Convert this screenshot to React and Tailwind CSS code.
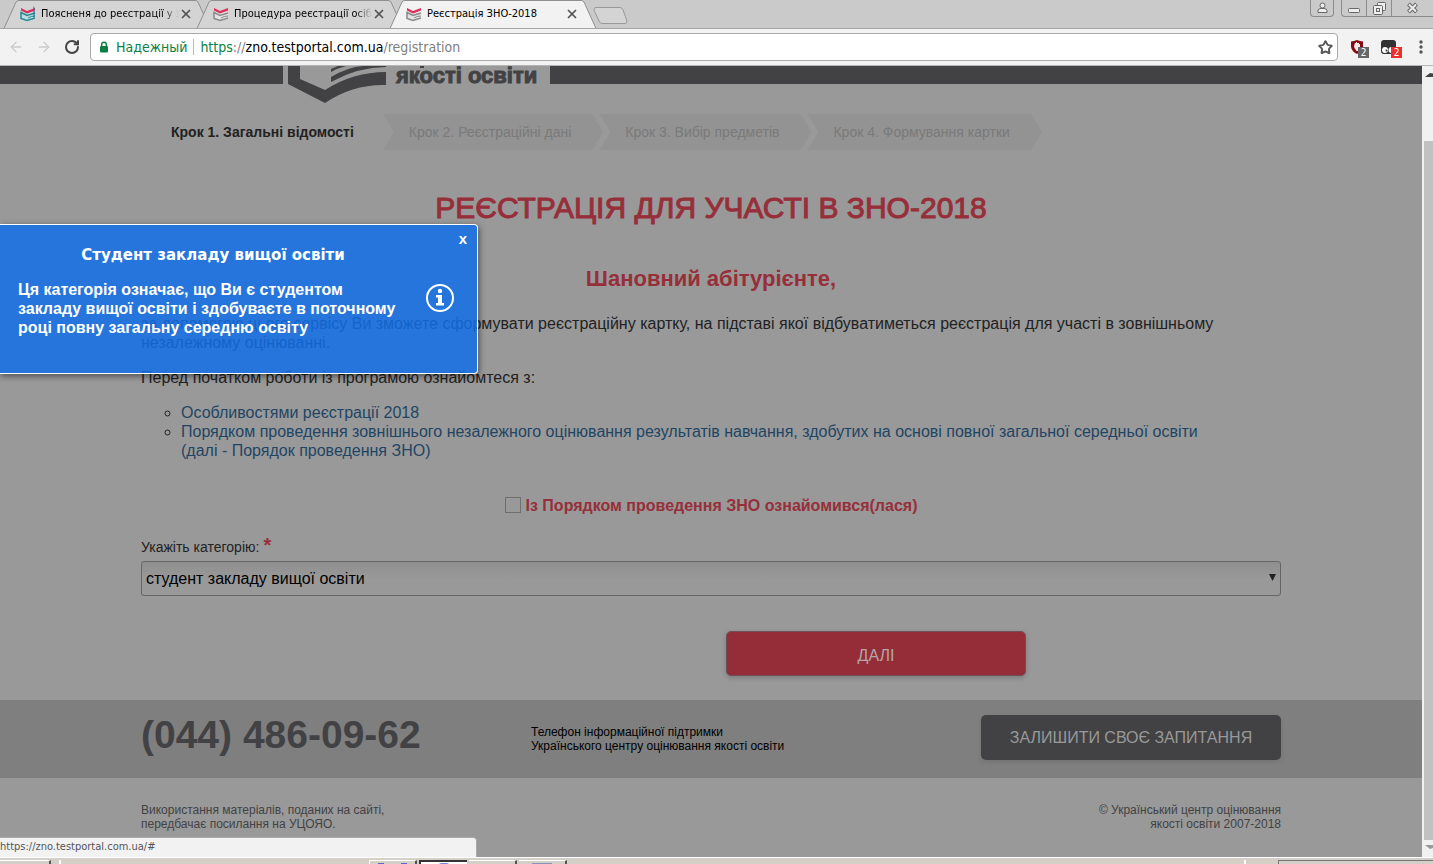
import { useState } from 'react'
import { ArrowLeft, ArrowRight, RotateCw, Star, X } from 'lucide-react'

const tabs = [
  { title: 'Поясненя до реєстрації у з', favicon: 'teal' },
  { title: 'Процедура реєстрації осіб', favicon: 'gray' },
  { title: 'Реєстрація ЗНО-2018', favicon: 'gray', active: true },
]

const nextSteps = ['Крок 2. Реєстраційні дані', 'Крок 3. Вибір предметів', 'Крок 4. Формування картки']

const categories = ['студент закладу вищої освіти']

function Favicon({ variant }) {
  const page = variant === 'teal' ? '#2c8a94' : '#8b8b8b'
  return (
    <svg className="relative w-4 h-4 shrink-0" viewBox="0 0 16 16" fill="none">
      <path d="M1 5v7l6 3 8-3V6" fill={variant === 'teal' ? '#bcdcde' : '#e3e3e3'} />
      <path d="M1 6.500l6 3 8-2.500M1 5.500v7L7 14.500l8-2.500" stroke={page} strokeWidth="1.6" />
      <path d="M8 12q3-2 7-2" stroke={page} strokeWidth="1" />
      <path d="M1 2l6 3 8-3v2.500L7 7.500 1 4.500z" fill="#dc2f5c" />
      {variant === 'teal' && <path d="M13 0v12l2-1V2z" fill="#2c6f8f" opacity=".6" />}
    </svg>
  )
}

function Tab({ tab }) {
  return (
    <div className={`relative flex items-center w-[206px] h-7 pl-4 -mr-[13px] ${tab.active ? 'z-10' : ''}`}>
      <svg className="absolute inset-0 w-full h-full" viewBox="0 0 206 28" preserveAspectRatio="none">
        <path
          d="M0 28.500L12 2Q13 .5 15 .5H191Q193 .5 194 2L206 28.500"
          fill={tab.active ? '#f2f2f2' : '#d4d4d4'}
          stroke="#8f8f8f"
        />
      </svg>
      <Favicon variant={tab.favicon} />
      <button
        className={`relative ml-[5px] w-[138px] whitespace-nowrap text-left text-[11px] leading-4 text-black ${
          tab.active ? '' : '[mask-image:linear-gradient(to_right,black_88%,transparent)]'
        }`}
      >
        {tab.title}
      </button>
      <button aria-label="Закрити вкладку" className="relative text-[#555]">
        <X size={14} strokeWidth={3} />
      </button>
    </div>
  )
}

function WindowButtons() {
  return (
    <div className="ml-auto flex items-start text-[#666]">
      <button aria-label="Профіль" className="w-6 h-[17px] mr-[7px] flex justify-center items-center border border-t-0 border-[#8c8c8c] rounded-b">
        <svg width="11" height="12" viewBox="0 0 11 12" fill="#eee" stroke="currentColor">
          <path d="M1 10.500V8l2-1.500h5L10 8v2.500z" />
          <circle cx="5.500" cy="3.500" r="2.500" />
        </svg>
      </button>
      <div className="flex h-[17px] border border-r-0 border-t-0 border-[#8c8c8c] rounded-bl">
        <button aria-label="Згорнути" className="w-[25px] flex justify-center items-center border-r border-[#8c8c8c]">
          <svg width="13" height="12" viewBox="0 0 13 12" fill="#eee" stroke="currentColor">
            <rect x=".5" y="6.500" width="11" height="4" rx="1" />
          </svg>
        </button>
        <button aria-label="Розгорнути" className="w-[25px] flex justify-center items-center border-r border-[#8c8c8c]">
          <svg width="13" height="13" viewBox="0 0 13 13" fill="#eee" stroke="currentColor">
            <rect x="4.500" y=".5" width="8" height="8" rx="1" />
            <rect x=".5" y="3.500" width="9" height="9" rx="1" />
            <rect x="3.500" y="6.500" width="3" height="3" />
          </svg>
        </button>
        <button aria-label="Закрити" className="w-[41px] flex justify-center items-center">
          <svg width="13" height="12" viewBox="0 0 13 12">
            <path d="M2.500 2l8 8M10.500 2l-8 8" stroke="#666" strokeWidth="4" />
            <path d="M3 2.500l7 7M10 2.500l-7 7" stroke="#eee" strokeWidth="2" />
          </svg>
        </button>
      </div>
    </div>
  )
}

function BrowserBar() {
  return (
    <div className="font-['DejaVu_Sans_Condensed','Noto_Sans',sans-serif]">
      <div className="flex h-7 pl-1 bg-[#cacaca]">
        {tabs.map(tab => <Tab key={tab.title} tab={tab} />)}
        <button aria-label="Нова вкладка" className="ml-2.5 mt-[7px] self-start">
          <svg width="36" height="18" viewBox="0 0 36 18" fill="#d4d4d4" stroke="#999">
            <path d="M3 .5H27Q29 .5 30 3L34 14Q34 16.500 32 16.500H9Q7 16.500 6 14L1 3Q1 .5 3 .5z" />
          </svg>
        </button>
        <WindowButtons />
      </div>
      <div className="flex items-center h-[38px] pl-2 bg-[#f2f2f2] border-t border-b border-t-[#a5a5a5] border-b-[#b5b5b5]">
        <button aria-label="Назад" className="text-[#ccc]"><ArrowLeft size={16} /></button>
        <button aria-label="Вперед" className="ml-3 text-[#ccc]"><ArrowRight size={16} /></button>
        <button aria-label="Оновити" className="ml-3 text-[#444]"><RotateCw size={16} strokeWidth={3} /></button>
        <div className="flex flex-1 items-center h-7 ml-2.5 px-2 bg-white border border-[#a9a9a9] rounded-sm text-[14px] leading-5">
          <svg width="10" height="12" viewBox="0 0 10 12" fill="#0b8043">
            <rect x="1" y="5" width="8" height="6.500" rx="1" />
            <path d="M2.700 5.500V3.500a2.300 2.300 0 0 1 4.600 0V5.500" fill="none" stroke="#0b8043" strokeWidth="1.4" />
          </svg>
          <span className="ml-[7px] text-[#0b8043]">Надежный</span>
          <span className="mx-1.5 w-px h-4 bg-[#bbb]" />
          <span className="flex-1 text-[#808080]">
            <span className="text-[#0b8043]">https</span>://<span className="text-black">zno.testportal.com.ua</span>/registration
          </span>
          <button aria-label="Додати закладку" className="-mr-1 text-[#555]"><Star size={15} strokeWidth={3} /></button>
        </div>
        <button aria-label="Блокувальник" className="relative ml-3">
          <svg width="14" height="16" viewBox="0 0 14 16">
            <path d="M7 1Q10 2 13 2.500V8Q12 13 7 15Q2 13 1 8V2.500Q4 2 7 1z" fill="#8a0a14" />
            <path d="M4 7l1-3 1 0V3h1v1l2 0v1l1 0v5l-2 2H6.500L4.500 9z" fill="#f5e9e9" />
          </svg>
          <span className="absolute left-2 top-2 w-[11px] h-[11px] bg-[#666] text-white text-[10px] leading-[11px]">2</span>
        </button>
        <button aria-label="Розширення" className="relative ml-[17px]">
          <svg width="15" height="16" viewBox="0 0 15 16">
            <rect y="1" width="15" height="14" rx="3" fill="#333" />
            <circle cx="4" cy="11" r="3" fill="#fff" />
            <circle cx="10.500" cy="11" r="3" fill="#fff" />
            <circle cx="5.500" cy="11.500" r="1" fill="#333" />
          </svg>
          <span className="absolute left-2.5 top-2 w-[11px] h-[11px] bg-[#ee2d2d] text-white text-[10px] leading-[11px]">2</span>
        </button>
        <button aria-label="Меню" className="ml-[23px] mr-[10px]">
          <svg width="4" height="16" viewBox="0 0 4 16" fill="#555">
            <circle cx="2" cy="3" r="1.700" /><circle cx="2" cy="8" r="1.700" /><circle cx="2" cy="13" r="1.700" />
          </svg>
        </button>
      </div>
    </div>
  )
}

function SiteHeader() {
  return (
    <header className="flex h-[18px] bg-[#424244]">
      <div className="flex ml-[283px] w-[267px] h-[18px] bg-[#999]">
        <svg className="ml-[5px] shrink-0 overflow-visible" width="99" height="38" viewBox="0 0 99 38" fill="#424244">
          <path d="M0 0H12V13L37 24Q65 6 98 6V19Q65 18 37 37L0 18z" />
          <path d="M43 16V11Q60 1 75 0H98V1Q70 1 43 16z" />
          <path d="M43 6V3L50 0H58Q50 2 43 6z" />
          <path d="M132 0h4v2h-4z" />
        </svg>
        <span className="ml-[9px] whitespace-nowrap text-[22px] leading-[20px] font-bold text-[#424244] [-webkit-text-stroke:1px_#424244]">якості освіти</span>
      </div>
    </header>
  )
}

function Steps() {
  return (
    <ol className="flex h-9 pl-[30px] text-[14px] leading-9">
      <li className="mr-[29px] font-bold text-[#222]">Крок 1. Загальні відомості</li>
      {nextSteps.map(step => (
        <li
          key={step}
          className="-mr-1 pl-[26px] pr-8 bg-[#939393] text-[#7a7a7a] [clip-path:polygon(0_0,calc(100%_-_11px)_0,100%_50%,calc(100%_-_11px)_100%,0_100%,11px_50%)]"
        >
          {step}
        </li>
      ))}
    </ol>
  )
}

function InfoPopup({ onClose }) {
  return (
    <aside className="absolute left-0 top-[158px] flex w-[478px] h-[150px] bg-[#126fe7]/85 border border-l-0 border-white rounded-r-sm shadow-[1px_2px_6px_rgba(0,0,0,0.5)] text-white font-bold">
      <div className="w-[425px] pl-[18px] pt-5 text-[16px] leading-[19px]">
        <h3 className="w-[390px] mb-[15px] text-center text-[15px] font-bold leading-5 font-['DejaVu_Sans',sans-serif]">Студент закладу вищої освіти</h3>
        <p className="w-[390px]">
          Ця категорія означає, що Ви є студентом закладу вищої освіти і здобуваєте в поточному році повну загальну середню освіту
        </p>
      </div>
      <svg className="mt-[58px] w-[30px] h-[30px]" viewBox="0 0 30 30" fill="white">
        <circle cx="15" cy="15" r="13" fill="none" stroke="white" strokeWidth="2" />
        <circle cx="15" cy="8" r="2.200" />
        <path d="M11 12h6v8h2v2.500h-8V20h2v-5.500h-2z" />
      </svg>
      <button aria-label="Закрити" onClick={onClose} className="absolute right-2.5 top-1.5 text-[15px] leading-4">x</button>
    </aside>
  )
}

function RegistrationForm() {
  const [agreed, setAgreed] = useState(false)

  return (
    <form onSubmit={e => e.preventDefault()}>
      <div className="flex justify-center items-center mt-[35px] h-5">
        <input
          id="agree"
          type="checkbox"
          checked={agreed}
          onChange={e => setAgreed(e.target.checked)}
          className="appearance-none w-4 h-4 border border-[#6b6f70] checked:bg-[#444]"
        />
        <label htmlFor="agree" className="ml-[5px] text-[16px] font-bold text-[#972f3a]">Із Порядком проведення ЗНО ознайомився(лася)</label>
      </div>

      <label htmlFor="category" className="flex gap-1 mt-[22px] text-[14px] leading-5">
        Укажіть категорію: <span className="text-[20px] leading-4 font-bold text-[#972f3a]">*</span>
      </label>
      <div className="relative mt-1">
        <select
          id="category"
          className="block appearance-none w-full h-[35px] px-1 text-[16px] text-black bg-linear-to-b from-[#8e8e8e] to-[#999] to-50% border border-[#666] rounded-[3px]"
        >
          {categories.map(c => <option key={c}>{c}</option>)}
        </select>
        <svg className="absolute right-[5px] top-[13px] pointer-events-none" width="7" height="7" viewBox="0 0 7 7">
          <path d="M0 0h7L3.500 7z" fill="#222" />
        </svg>
      </div>

      <div className="grid grid-cols-2 mt-[35px]">
        <button className="col-start-2 ml-[15px] w-[300px] h-[45px] pt-1 bg-[#942d38] border border-[#6b5357] rounded-[5px] shadow-[0_2px_5px_rgba(0,0,0,0.2)] text-[16px] text-[#b5a5a7]">
          ДАЛІ
        </button>
      </div>
    </form>
  )
}

function SiteFooter() {
  return (
    <footer className="text-[12px] leading-[14px]">
      <div className="mt-6 bg-[#7f7f7f]">
        <div className="flex max-w-[1140px] h-[78px] mx-auto">
          <div className="w-[390px] pt-[15px] text-[39px] leading-10 font-bold text-[#424244]">(044) 486-09-62</div>
          <p className="pt-[25px] text-black">
            Телефон інформаційної підтримки<br />Українського центру оцінювання якості освіти
          </p>
          <button className="ml-auto mt-[15px] w-[300px] h-[45px] bg-[#424244] rounded-[5px] shadow-[0_2px_5px_rgba(0,0,0,0.1)] text-[16px] text-[#999]">
            ЗАЛИШИТИ СВОЄ ЗАПИТАННЯ
          </button>
        </div>
      </div>
      <div className="flex justify-between max-w-[1140px] mx-auto pt-[25px] pb-[26px] text-[#424244]">
        <p>Використання матеріалів, поданих на сайті,<br />передбачає посилання на УЦОЯО.</p>
        <p className="text-right">© Український центр оцінювання<br />якості освіти 2007-2018</p>
      </div>
    </footer>
  )
}

function ScrollBar() {
  return (
    <div className="flex flex-col items-end w-[11px] shrink-0 bg-[#f1f1f1] overflow-hidden">
      <svg width="9" height="19" viewBox="0 0 9 19"><path d="M1 11h8V7.500L6 7z" fill="#444" /></svg>
      <div className="mt-14 w-[9px] flex-1 bg-[#c1c1c1]" />
      <svg width="9" height="17" viewBox="0 0 9 17"><path d="M1 5h8v3L6 9z" fill="#999" /></svg>
    </div>
  )
}

function TaskBar() {
  return (
    <div className="flex h-[7px] pt-0.5 overflow-hidden bg-[#d4d0c8] border-t border-white">
      <div className="w-[51px] border-t border-r-2 border-t-white border-r-[#555]" />
      <div className="ml-2 mr-[308px] w-0.5 bg-white" />
      <div className="w-12 border-t border-l border-r-2 border-l-white border-t-white border-r-[#555]">
        <div className="mx-2 mt-0.5 h-1 border-x-6 border-[#5964cc]" />
      </div>
      <div className="ml-0.5 w-12 border-t-2 border-l-2 border-[#333] bg-white">
        <div className="mx-auto mt-px h-1 w-3 rounded-t bg-[#7386dc]" />
      </div>
      <div className="ml-0.5 w-12 border-t border-r-2 border-t-white border-r-[#555]" />
      <div className="ml-0.5 w-12 border-t border-r-2 border-t-white border-r-[#555]">
        <div className="mx-auto mt-0.5 h-1 w-5 bg-[#8795b4]" />
      </div>
      <div className="ml-auto mr-8 w-0.5 bg-white" />
      <div className="w-[155px] border-t border-l border-[#777]" />
    </div>
  )
}

export default function App() {
  const [popupOpen, setPopupOpen] = useState(true)

  return (
    <div className="flex flex-col min-h-screen overflow-hidden bg-[#999]">
      <BrowserBar />
      <div className="relative flex flex-1 font-['Liberation_Sans',Arial,sans-serif] text-[16px] leading-[19px] text-[#222]">
        <div className="flex-1 min-w-0 bg-[#999]">
          <SiteHeader />
          <main className="max-w-[1140px] mx-auto pt-[30px]">
            <Steps />
            <h1 className="mt-[38px] text-center text-[30px] leading-10 text-[#972f3a] [-webkit-text-stroke:1px_#972f3a]">
              РЕЄСТРАЦІЯ ДЛЯ УЧАСТІ В ЗНО-2018
            </h1>
            <h2 className="mt-9 text-center text-[22px] leading-[30px] font-bold text-[#972f3a]">Шановний абітурієнте,</h2>
            <p className="mt-5">
              за допомогою цього сервісу Ви зможете сформувати реєстраційну картку, на підставі якої відбуватиметься реєстрація для участі в зовнішньому незалежному оцінюванні.
            </p>
            <p className="mt-4">Перед початком роботи із програмою ознайомтеся з:</p>
            <ul className="mt-4 pl-10 pr-[60px] list-[circle] text-[#1f4564]">
              <li className="marker:text-[#222]"><a href="#features">Особливостями реєстрації 2018</a></li>
              <li className="marker:text-[#222]">
                <a href="#order">
                  Порядком проведення зовнішнього незалежного оцінювання результатів навчання, здобутих на основі повної загальної середньої освіти (далі - Порядок проведення ЗНО)
                </a>
              </li>
            </ul>
            <RegistrationForm />
          </main>
          <SiteFooter />
        </div>
        <ScrollBar />
        {popupOpen && <InfoPopup onClose={() => setPopupOpen(false)} />}
        <div className="absolute left-0 bottom-0 w-[477px] h-5 bg-[#f2f2f2] border-t border-r border-[#aaa] rounded-tr text-[11px] leading-[18px] text-[#555] font-['DejaVu_Sans_Condensed','Noto_Sans',sans-serif]">
          https://zno.testportal.com.ua/#
        </div>
      </div>
      <TaskBar />
    </div>
  )
}
